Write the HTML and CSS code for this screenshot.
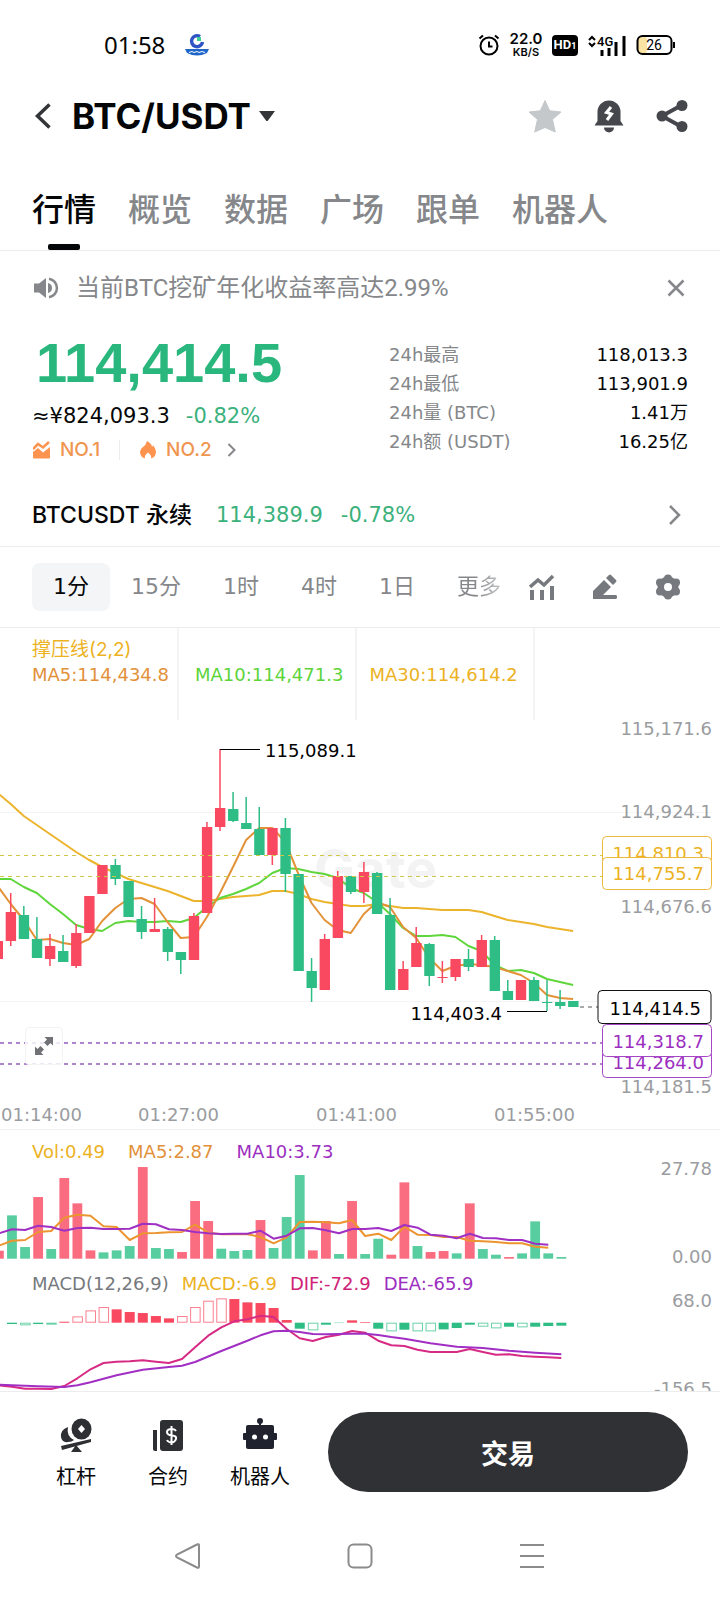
FILE: index.html
```html
<!DOCTYPE html>
<html lang="zh-CN">
<head>
    <meta charset="UTF-8">
    <meta name="viewport" content="width=device-width, initial-scale=1.0">

    <title>BTC/USDT</title>

    <link rel="stylesheet" href="styles.css">
</head>

<body>
    <!-- Status bar -->
    <div class="status-bar">
        <span class="clock">01:58</span>
        <svg class="status-app" width="24" height="24" viewBox="0 0 24 24">
            <path d="M15 3.500A5.500 5.500 0 1 0 17.500 9" fill="none" stroke="#2f55c4" stroke-width="3.500"/>
            <rect x="12" y="4" width="4" height="4" fill="#3fd09a"/>
            <path d="M0 16h24l-2 4q-10 5-20 0z" fill="#1f66c9"/>
            <path d="M4 19.500l3-1 2 1 3-1 2 1 3-1 3 1" fill="none" stroke="#fff" stroke-width="1"/>
        </svg>
        <div class="status-right">
            <svg width="22" height="24" viewBox="0 0 22 24" fill="none" stroke="#000" stroke-width="2">
                <circle cx="11" cy="13" r="8.500"/>
                <path d="M11 8.500V13.500H14.500M1.500 5.500L5 2.500M20.500 5.500L17 2.500"/>
            </svg>
            <div class="net-speed"><b>22.0</b><span>KB/S</span></div>
            <span class="hd-badge">HD<small>1</small></span>
            <svg width="38" height="24" viewBox="0 0 38 24">
                <path d="M1 7l3-3 3 3M1 10l3 3 3-3" fill="none" stroke="#000" stroke-width="2"/>
                <text x="9" y="13" class="net-type">4G</text>
                <path d="M14 17v6M21 15v8M28 9v14M36 3v20" stroke="#000" stroke-width="3"/>
            </svg>
            <svg width="40" height="24" viewBox="0 0 40 24">
                <rect x="2" y="3" width="9" height="18" rx="4" fill="#fbe3a4"/>
                <rect x="1.500" y="3" width="34" height="18" rx="5" fill="none" stroke="#000" stroke-width="2"/>
                <path d="M38 9v6" stroke="#000" stroke-width="2"/>
                <text x="18" y="17" class="battery-text">26</text>
            </svg>
        </div>
    </div>

    <!-- Pair header -->
    <header class="header">
        <button class="icon-btn" aria-label="返回">
            <svg width="18" height="28" viewBox="0 0 18 28"><path d="M15.500 2.500L3.500 14l12 11.500" fill="none" stroke="#333538" stroke-width="3.500"/></svg>
        </button>
        <button class="pair">
            <h1>BTC/USDT</h1>
            <svg width="16" height="12" viewBox="0 0 16 12"><path d="M0 1h16L9 10.500q-1 1-2 0z" fill="#333538"/></svg>
        </button>
        <div class="header-icons">
            <button class="icon-btn" aria-label="收藏">
                <svg width="34" height="34" viewBox="0 0 34 34"><path d="M17 1.500l4.700 10.300 11.300 1.200-8.500 7.500 2.800 12.500L17 28.500 6.700 33l2.800-12.500L1 13l11.300-1.200z" fill="#c4c8cb" stroke="#c4c8cb" stroke-linejoin="round"/></svg>
            </button>
            <button class="icon-btn" aria-label="提醒">
                <svg width="30" height="34" viewBox="0 0 30 34">
                    <path d="M3.500 25V13a11.500 11.500 0 0 1 23 0v9l3 4.500H.500l3-4.500z" fill="#45474c"/>
                    <path d="M10 28.500h10a5 5 0 0 1-10 0z" fill="#45474c"/>
                    <path d="M17 8l-4.500 5.500 5 1.500-4.500 6" fill="none" stroke="#fff" stroke-width="3"/>
                </svg>
            </button>
            <button class="icon-btn" aria-label="分享">
                <svg width="32" height="34" viewBox="0 0 32 34" fill="#45474c">
                    <path d="M26 6L6 17l20 11" fill="none" stroke="#45474c" stroke-width="4"/>
                    <circle cx="6" cy="17" r="5.500"/><circle cx="26" cy="6.500" r="5.500"/><circle cx="26" cy="27.500" r="5.500"/>
                </svg>
            </button>
        </div>
    </header>

    <nav class="tabs">
        <a href="#" class="active">行情</a>
        <a href="#">概览</a>
        <a href="#">数据</a>
        <a href="#">广场</a>
        <a href="#">跟单</a>
        <a href="#">机器人</a>
    </nav>

    <!-- Notice -->
    <div class="notice">
        <svg width="26" height="22" viewBox="0 0 26 22">
            <path d="M0 6.500h5L12 1v20L5 15.500H0z" fill="#85878a"/>
            <path d="M14 6q4 1 4 5t-4 5z" fill="#85878a"/>
            <path d="M15 1.800a9.300 9.300 0 0 1 0 18.400" fill="none" stroke="#85878a" stroke-width="2.500"/>
        </svg>
        <p>当前BTC挖矿年化收益率高达2.99%</p>
        <button class="icon-btn" aria-label="关闭">
            <svg width="18" height="18" viewBox="0 0 18 18"><path d="M1.500 1.500l15 15M16.500 1.500l-15 15" stroke="#85878a" stroke-width="2.500"/></svg>
        </button>
    </div>

    <!-- Price summary -->
    <section class="summary">
        <div class="price-box">
            <div class="price">114,414.5</div>
            <div class="price-sub"><span>≈¥824,093.3</span><span class="up">-0.82%</span></div>
            <a href="#" class="ranks">
                <svg width="18" height="18" viewBox="0 0 18 18">
                    <path d="M0 8l5-5 5 3.500L16 1" fill="none" stroke="#fc9450" stroke-width="2.500"/>
                    <path d="M0 11l5-4 5 4.500L17 6v10.500q0 1-1 1H1q-1 0-1-1z" fill="#fc9450"/>
                </svg>
                <span>NO.1</span>
                <i></i>
                <svg width="18" height="18" viewBox="0 0 18 18"><path d="M8 0q5 3 5 6 1-1 1-2 3 4 3 7a7 7 0 0 1-5 6.500q1-3-3-6-4 3-3 6A7 7 0 0 1 1 11q0-3 3-5 3-2 4-6z" fill="#fc9450"/></svg>
                <span>NO.2</span>
                <svg width="10" height="16" viewBox="0 0 10 16"><path d="M1.500 2l6 6-6 6" fill="none" stroke="#85878a" stroke-width="2"/></svg>
            </a>
        </div>
        <dl class="stats">
            <dt>24h最高</dt><dd>118,013.3</dd>
            <dt>24h最低</dt><dd>113,901.9</dd>
            <dt>24h量 (BTC)</dt><dd>1.41万</dd>
            <dt>24h额 (USDT)</dt><dd>16.25亿</dd>
        </dl>
    </section>

    <a href="#" class="perp">
        <span>BTCUSDT 永续</span>
        <span class="up">114,389.9</span>
        <span class="up">-0.78%</span>
        <svg width="14" height="22" viewBox="0 0 14 22"><path d="M2 2l9 9-9 9" fill="none" stroke="#85878a" stroke-width="2.500"/></svg>
    </a>

    <!-- Time frames -->
    <div class="frames">
        <button class="active">1分</button>
        <button>15分</button>
        <button>1时</button>
        <button>4时</button>
        <button>1日</button>
        <button class="more">更多</button>
        <div class="tools">
            <button aria-label="指标">
                <svg width="26" height="26" viewBox="0 0 26 26" fill="none" stroke="#76797d" stroke-width="4">
                    <path d="M1 13l8-7 6 5L24 2" stroke-width="3.500"/><path d="M3 16v10M13 16v10M23 12v14"/>
                </svg>
            </button>
            <button aria-label="画线">
                <svg width="26" height="26" viewBox="0 0 26 26" fill="#76797d">
                    <path d="M1 25v-8L12 6l7 7-8 8h13q1 0 1 2t-1 2z"/><path d="M14 4l3-3q1-1 2 0l5 5q1 1 0 2l-3 3z"/>
                </svg>
            </button>
            <button aria-label="设置">
                <svg width="26" height="26" viewBox="0 0 26 26" fill="#76797d">
                    <circle cx="13" cy="13" r="10.500"/>
                    <circle cx="13" cy="4.500" r="4"/><circle cx="13" cy="21.500" r="4"/>
                    <circle cx="5" cy="8.500" r="4"/><circle cx="21" cy="8.500" r="4"/>
                    <circle cx="5" cy="17.500" r="4"/><circle cx="21" cy="17.500" r="4"/>
                    <circle cx="13" cy="13" r="4" fill="#fff"/>
                </svg>
            </button>
        </div>
    </div>

    <!-- Candles -->
    <section class="panel">
        <div class="legend">
            <div class="indicator yellow">撑压线(2,2)</div>
            <div class="legend-row wide">
                <span class="orange">MA5:114,434.8</span>
                <span class="green">MA10:114,471.3</span>
                <span class="yellow">MA30:114,614.2</span>
            </div>
        </div>
        <svg viewBox="0 628 720 501">
            <path class="col-line" d="M178 628v92M356 628v92M534 628v92"/>
            <path class="grid-line" d="M0 812.500h712M0 1001.500h712"/>
            <text class="watermark" x="314" y="888">Gate</text>
            <g id="candles"></g>
            <path class="level yellow-line" d="M0 855.500h602M0 876.500h602"/>
            <path class="level purple-line" d="M0 1043h602M0 1064h602"/>
            <path class="level" stroke="#555" d="M580 1007h18"/>
            <path d="M220 749.500h40M507 1011.500h40" stroke="#000"/>
            <text x="265" y="757" class="mark">115,089.1</text>
            <text x="502" y="1020" class="mark end">114,403.4</text>
            <g class="axis">
                <text x="712" y="735">115,171.6</text>
                <text x="712" y="818">114,924.1</text>
                <text x="712" y="913">114,676.6</text>
                <text x="712" y="1093">114,181.5</text>
            </g>
            <g class="tag tag-yellow">
                <rect x="602.500" y="836.500" width="109" height="32" rx="4"/><text x="704" y="860">114,810.3</text>
                <rect x="602.500" y="857.500" width="109" height="32" rx="4"/><text x="704" y="880">114,755.7</text>
            </g>
            <g class="tag tag-purple">
                <rect x="602.500" y="1045.500" width="109" height="32" rx="4"/><text x="704" y="1069">114,264.0</text>
                <rect x="602.500" y="1024.500" width="109" height="32" rx="4"/><text x="704" y="1048">114,318.7</text>
            </g>
            <g class="tag tag-black">
                <rect x="598" y="990.500" width="113" height="33" rx="4"/><text x="701" y="1015">114,414.5</text>
            </g>
            <g class="axis times">
                <text x="1" y="1121">01:14:00</text>
                <text x="138" y="1121">01:27:00</text>
                <text x="316" y="1121">01:41:00</text>
                <text x="494" y="1121">01:55:00</text>
            </g>
        </svg>
        <button class="expand" aria-label="全屏">
            <svg width="18" height="18" viewBox="0 0 18 18" fill="#707275"><path d="M9.500 0H18v8.500l-2.500-2.500-3 3L9 5.500l3-3zM0 9.500V18h8.500L6 15.500l3-3L5.500 9l-3 3z"/></svg>
        </button>
    </section>

    <!-- Volume -->
    <section class="panel volume">
        <div class="legend legend-row">
            <span class="yellow">Vol:0.49</span>
            <span class="orange">MA5:2.87</span>
            <span class="purple">MA10:3.73</span>
        </div>
        <svg viewBox="0 0 720 136">
            <g id="volume"></g>
            <g class="axis">
                <text x="712" y="45">27.78</text>
                <text x="712" y="133">0.00</text>
            </g>
        </svg>
    </section>

    <!-- MACD -->
    <section class="panel last">
        <div class="legend legend-row tight">
            <span class="grey">MACD(12,26,9)</span>
            <span class="yellow">MACD:-6.9</span>
            <span class="pink">DIF:-72.9</span>
            <span class="purple">DEA:-65.9</span>
        </div>
        <svg viewBox="0 136 720 125">
            <g id="macd"></g>
            <g class="axis">
                <text x="712" y="177">68.0</text>
                <text x="712" y="265">-156.5</text>
            </g>
        </svg>
    </section>

    <!-- Bottom actions -->
    <footer class="actions">
        <a href="#">
            <svg width="36" height="36" viewBox="0 0 36 36" fill="#2d2f33">
                <ellipse cx="23.500" cy="12" rx="10" ry="10.500"/>
                <path d="M23.500 8l3.500 4-3.500 4-3.500-4z" fill="#fff"/>
                <path d="M10 10Q2 13 3 20q1 6 7 5 4 0 6-2-8-4-6-13z"/>
                <path d="M3 29L33 22v3L4 33zM18 28l6 7H13z"/>
            </svg>
            <span>杠杆</span>
        </a>
        <a href="#">
            <svg width="36" height="36" viewBox="0 0 36 36" fill="#2d2f33">
                <path d="M3 13h4v21H5q-2 0-2-2z"/><rect x="10" y="3" width="23" height="31" rx="3"/>
                <path d="M26 14q-1-2-4-2-5 0-5 3t5 3.500 4 3.500-4 3.500q-4 0-5-2.500M21.500 9v19" fill="none" stroke="#fff" stroke-width="2"/>
            </svg>
            <span>合约</span>
        </a>
        <a href="#">
            <svg width="36" height="36" viewBox="0 0 36 36" fill="#20232e">
                <circle cx="18" cy="4" r="3"/><path d="M17 5h2v5h-2z"/>
                <rect x="4" y="8" width="28" height="24" rx="2"/><rect x="1" y="16" width="34" height="7" rx="1"/>
                <circle cx="12.500" cy="20" r="2.500" fill="#fff"/><circle cx="23.500" cy="20" r="2.500" fill="#fff"/>
            </svg>
            <span>机器人</span>
        </a>
        <button class="trade">交易</button>
    </footer>

    <!-- System navigation -->
    <div class="sys-nav">
        <svg width="28" height="28" viewBox="0 0 28 28"><path d="M23 2.500q2-1 2 1v21q0 2-2 1L3 15.500q-2-1.500 0-3z"/></svg>
        <svg width="28" height="28" viewBox="0 0 28 28"><rect x="2.500" y="2.500" width="23" height="23" rx="5"/></svg>
        <svg width="28" height="28" viewBox="0 0 28 28"><path d="M2 3h24M2 14h24M2 25h24"/></svg>
    </div>

    <script src="chart.js"></script>
</body>

</html>
```
FILE: styles.css
```css
* {
    box-sizing: border-box;
}

body {
    margin: 0;
    background-color: #fff;
    color: #050607;
    font-family: Inter, "Noto Sans CJK SC", sans-serif;
}

a {
    color: inherit;
    text-decoration: none;
}

button {
    padding: 0;
    border: none;
    background: none;
    color: inherit;
    font: inherit;
    cursor: pointer;
}

svg {
    display: block;
    flex-shrink: 0;
}

.up {
    color: #3bb17c;
}

.yellow {
    color: #ecb21f;
}

.orange {
    color: #e2913a;
}

.green {
    color: #5cd43a;
}

.purple {
    color: #9c2fc0;
}

.pink {
    color: #cf2277;
}

.grey {
    color: #76797d;
}

/* Status bar */
.status-bar {
    display: flex;
    align-items: center;
    height: 88px;
    padding: 2px 44px 0 104px;
}

.clock {
    font-family: "Noto Sans", sans-serif;
    font-size: 24px;
    line-height: 32px;
}

.status-app {
    margin-left: 20px;
}

.status-right {
    display: flex;
    align-items: center;
    gap: 10px;
    margin-left: auto;
}

.net-speed {
    display: flex;
    flex-direction: column;
    align-items: center;
    width: 32px;
    font-size: 11px;
    font-weight: 600;
    line-height: 12px;
}

.net-speed b {
    font-size: 15px;
    font-weight: 600;
    line-height: 14px;
}

.hd-badge {
    width: 26px;
    border-radius: 4px;
    background-color: #000;
    color: #fff;
    font-family: Roboto, sans-serif;
    font-size: 13px;
    font-weight: 700;
    line-height: 20px;
    text-align: center;
}

.hd-badge small {
    font-size: 9px;
}

.net-type {
    font-family: Roboto, sans-serif;
    font-size: 13px;
    font-weight: 500;
}

.battery-text {
    font-family: Roboto, sans-serif;
    font-size: 14px;
    text-anchor: middle;
}

/* Header */
.header {
    display: flex;
    align-items: center;
    height: 56px;
    padding: 0 32px 0 34px;
}

.pair {
    display: flex;
    align-items: center;
    gap: 8px;
    margin-left: 20px;
}

.pair h1 {
    margin: 0;
    font-size: 35px;
    font-weight: 700;
    line-height: 40px;
}

.header-icons {
    display: flex;
    gap: 32px;
    margin-left: auto;
}

/* Tabs */
.tabs {
    display: flex;
    gap: 32px;
    padding: 46px 32px 0;
    border-bottom: 1px solid #ececee;
    color: #85878a;
    font-size: 32px;
    font-weight: 500;
    line-height: 40px;
}

.tabs a {
    position: relative;
    padding-bottom: 20px;
}

.tabs .active {
    color: #050607;
}

.tabs .active::after {
    content: "";
    position: absolute;
    bottom: 0;
    left: 50%;
    width: 32px;
    height: 6px;
    margin-left: -16px;
    border-radius: 2px;
    background-color: #050607;
}

/* Notice */
.notice {
    display: flex;
    align-items: center;
    height: 74px;
    padding: 0 35px 0 34px;
    color: #85878a;
}

.notice p {
    flex: 1;
    margin: 0 0 0 16px;
    font-family: Roboto, "Noto Sans CJK SC", sans-serif;
    font-size: 24px;
    line-height: 32px;
}

/* Price summary */
.summary {
    display: flex;
    justify-content: space-between;
    padding: 10px 32px 24px;
}

.price {
    padding-left: 4px;
    color: #2ab77d;
    font-family: "Liberation Sans", sans-serif;
    font-size: 56px;
    font-weight: 700;
    line-height: 56px;
}

.price-sub {
    display: flex;
    gap: 16px;
    margin-top: 11px;
    font-family: "DejaVu Sans", sans-serif;
    font-size: 21px;
    line-height: 28px;
}

.ranks {
    display: flex;
    align-items: center;
    gap: 9px;
    margin-top: 10px;
    padding-left: 1px;
    color: #f09550;
    font-size: 19px;
    font-weight: 500;
    line-height: 20px;
}

.ranks i {
    width: 1px;
    height: 20px;
    margin: 0 10px;
    background-color: #ececee;
}

.ranks svg:last-child {
    margin-left: 6px;
}

.stats {
    display: grid;
    grid-template-columns: auto auto;
    grid-auto-rows: 29px;
    width: 299px;
    margin: 5px 0 0;
    font-family: "DejaVu Sans", "Noto Sans CJK SC", sans-serif;
    font-size: 18px;
    line-height: 29px;
}

.stats dt {
    color: #85878a;
}

.stats dd {
    margin: 0;
    text-align: right;
}

/* Perpetual contract */
.perp {
    display: flex;
    align-items: center;
    height: 63px;
    padding: 0 38px 0 32px;
    border-bottom: 1px solid #ececee;
    font-size: 23px;
    font-weight: 500;
    line-height: 32px;
}

.perp .up {
    margin-left: 24px;
    font-family: "DejaVu Sans", sans-serif;
    font-size: 21px;
    font-weight: 400;
}

.perp .up + .up {
    margin-left: 18px;
}

.perp svg {
    margin-left: auto;
}

/* Time frames */
.frames {
    display: flex;
    align-items: center;
    height: 81px;
    padding: 0 39px 0 32px;
    border-bottom: 1px solid #ececee;
    color: #85878a;
    font-family: "DejaVu Sans", "Noto Sans CJK SC", sans-serif;
    font-size: 22px;
    line-height: 32px;
}

.frames > button {
    height: 48px;
    padding: 0 21px;
    border-radius: 8px;
}

.frames > .active {
    background-color: #f3f5f7;
    color: #050607;
}

.frames > .more {
    padding-right: 0;
    background: linear-gradient(to right, #85878a 60%, #c4c5c7);
    background-clip: text;
    -webkit-background-clip: text;
    color: transparent;
}

.tools {
    display: flex;
    gap: 37px;
    margin-left: auto;
}

/* Chart panels */
.panel {
    position: relative;
    border-bottom: 1px solid #f0f0f2;
    font-family: "DejaVu Sans", "Noto Sans CJK SC", sans-serif;
}

.panel + .panel {
    border-bottom: none;
}

.panel > svg {
    width: 100%;
}

.volume > svg {
    overflow: visible;
}

.legend {
    position: absolute;
    top: 9px;
    left: 32px;
    font-size: 18px;
    line-height: 25px;
}

.indicator {
    height: 25px;
    font-family: Inter, "Noto Sans CJK SC", sans-serif;
    font-size: 19px;
}

.legend-row {
    display: flex;
    gap: 23px;
}

.last .legend {
    top: 5px;
}

.wide {
    gap: 26px;
}

.tight {
    gap: 13px;
}

.col-line,
.grid-line {
    stroke: #f3f4f5;
}

.col-line {
    stroke-width: 2;
}

.watermark {
    fill: #f3f3f3;
    font-family: Inter, sans-serif;
    font-size: 54px;
    font-weight: 700;
}

.level {
    stroke-dasharray: 4;
}

.yellow-line {
    stroke: #cfc746;
}

.purple-line {
    stroke: #b184cf;
    stroke-width: 2;
}

.mark,
.axis text,
.tag text {
    font-size: 18px;
}

.axis text {
    fill: #9a9c9f;
    text-anchor: end;
}

.axis.times text {
    text-anchor: start;
}

.mark.end,
.tag text {
    text-anchor: end;
}

.tag rect {
    fill: #fff;
}

.tag-yellow rect {
    stroke: #ecb93c;
}

.tag-yellow text {
    fill: #ecb21f;
}

.tag-purple rect {
    stroke: #a646c6;
}

.tag-purple text {
    fill: #9c2fc0;
}

.tag-black rect {
    stroke: #111;
}

.expand {
    position: absolute;
    bottom: 64px;
    left: 25px;
    padding: 9px;
    border: 1px solid #f3f3f4;
    border-radius: 4px;
    background-color: rgba(255, 255, 255, 0.8);
}

/* Bottom actions */
.actions {
    display: flex;
    align-items: center;
    padding: 20px 32px 20px 30px;
    border-top: 1px solid #ececee;
}

.actions a {
    display: flex;
    flex-direction: column;
    align-items: center;
    gap: 9px;
    width: 92px;
    padding-top: 5px;
    font-size: 20px;
    line-height: 30px;
}

.trade {
    flex: 1;
    height: 80px;
    margin-left: 22px;
    border-radius: 40px;
    background-color: #303135;
    color: #fff;
    font-size: 27px;
    font-weight: 700;
}

.sys-nav {
    display: flex;
    justify-content: center;
    align-items: center;
    gap: 144px;
    height: 87px;
}

.sys-nav svg {
    fill: none;
    stroke: #8b8b8b;
    stroke-width: 2;
}
```
FILE: chart.js
```js
const RED = "#f84960";
const GREEN = "#2ebd85";
const STEP = 13.08;

function add(parent, tag, attrs) {
    const el = document.createElementNS("http://www.w3.org/2000/svg", tag);
    for (const key in attrs) {
        el.setAttribute(key, attrs[key]);
    }
    parent.appendChild(el);
}

// null = no point for that bar, the line goes straight on
function line(parent, x0, values, color, scale) {
    const points = [];
    values.forEach((v, i) => {
        if (v !== null) {
            points.push((x0 + i * STEP).toFixed(1) + "," + (v * scale).toFixed(1));
        }
    });
    add(parent, "polyline", { points: points.join(" "), fill: "none", stroke: color, "stroke-width": 2, "stroke-linejoin": "round" });
}

// [direction, high, body top, body bottom, low]
const candles = [
    ["r", 941, 941, 959, 959], ["r", 893, 912, 941, 946], ["g", 906, 915, 939, 939], ["g", 917, 939, 958, 958],
    ["r", 934, 946, 959, 966], ["g", 935, 951, 962, 962], ["r", 924, 933, 966, 968], ["r", 896, 896, 933, 933],
    ["r", 865, 865, 894, 894], ["g", 859, 865, 879, 885], ["g", 881, 881, 917, 917], ["g", 906, 919, 932, 939],
    ["r", 898, 929, 932, 932], ["g", 927, 929, 952, 961], ["g", 952, 952, 960, 974], ["r", 913, 916, 960, 960],
    ["r", 822, 827, 913, 913], ["r", 749, 808, 827, 831], ["g", 792, 809, 821, 822], ["g", 797, 823, 829, 829],
    ["g", 807, 829, 855, 855], ["r", 828, 828, 855, 865], ["g", 818, 828, 874, 892], ["g", 874, 874, 971, 971],
    ["g", 958, 971, 988, 1002], ["r", 934, 939, 990, 990], ["r", 871, 876, 938, 938], ["g", 876, 876, 892, 894],
    ["r", 862, 872, 892, 903], ["g", 872, 873, 914, 914], ["g", 898, 915, 990, 990], ["r", 961, 969, 990, 990],
    ["r", 927, 943, 967, 967], ["g", 943, 944, 976, 986], ["r", 961, 977, 978, 983], ["r", 959, 959, 977, 981],
    ["g", 949, 959, 967, 971], ["r", 935, 940, 967, 967], ["g", 936, 940, 991, 991], ["g", 980, 991, 1000, 1000],
    ["r", 980, 980, 1000, 1000], ["g", 977, 980, 1001, 1001], ["g", 980, 1002, 1003, 1011], ["g", 990, 1002, 1006, 1009],
    ["g", 1001, 1001, 1007, 1007]
];
const ma30 = [793, 804, 816, 825, 834, 843, 852, 860, 867, 873, 879, 883, 887, 891, 896, 901, 901, 899, 897, 896, 895, 891, 891, 894, 899, 902, 904, 906, 906, 904, 906, 908, 908, 909, 910, 910, 910, 912, 916, 920, 922, 924, 927, 929, 931];
const ma10 = [879, 879, 887, 893, 904, 914, 925, 929, 931, 923, 921, 922, 922, 921, 922, 918, 907, 898, 894, 889, 883, 873, 868, 869, 872, 874, 878, 888, 893, 902, 914, 928, 936, 936, 935, 937, 946, 951, 965, 971, 970, 973, 979, 982, 985];
const ma5 = [886, 904, 920, 940, 939, 943, 945, 939, 921, 908, 899, 898, 904, 922, 938, 937, 917, 893, 867, 840, 828, 828, 842, 874, 903, 920, 930, 933, 914, 902, 907, 927, 938, 958, 971, 966, 964, 965, 967, 971, 975, 983, 995, 998, 999];

const main = document.getElementById("candles");
line(main, -2.4, ma30, "#ecb42c", 1);
line(main, -2.4, ma10, "#5fd63c", 1);
line(main, -2.4, ma5, "#e39238", 1);
candles.forEach(([dir, high, top, bottom, low], i) => {
    const x = -2.4 + i * STEP;
    const color = dir === "r" ? RED : GREEN;
    add(main, "rect", { x: x - 0.7, y: high, width: 1.5, height: low - high, fill: color });
    add(main, "rect", { x: x - 5, y: top, width: 10.4, height: bottom - top, fill: color });
});

// Volume bars, measured from the zero line
const volume = [
    "r24", "g130", "g35", "r185", "g29", "r242", "r166", "r25", "g19", "g25", "g38", "r275", "g32", "g29", "r20",
    "r173", "r113", "g30", "g23", "g26", "r116", "g32", "g125", "g251", "r25", "r113", "g14", "r173", "g14", "g60",
    "r12", "r229", "g38", "r20", "r23", "g16", "r166", "g29", "g12", "r5", "g16", "g112", "g16", "g5"
];
const volMa5 = [347, 332, 330, 306, 303, 263, 254, 257, 289, 291, 330, 310, 309, 307, 306, 284, 308, 313, 313, 313, 321, 340, 322, 276, 275, 277, 280, 270, 318, 311, 330, 290, 314, 315, 321, 321, 332, 334, 336, 340, 340, 350, 353];
const volMa10 = [310, 298, 300, 287, 291, 302, 294, 293, 297, 297, 296, 281, 283, 298, 300, 306, 310, 312, 311, 311, 302, 326, 317, 295, 294, 301, 310, 297, 297, 294, 303, 285, 293, 314, 317, 325, 311, 324, 325, 330, 330, 341, 344];

const vol = document.getElementById("volume");
volume.forEach((bar, i) => {
    const h = bar.slice(1) / 3;
    add(vol, "rect", { x: -6 + i * STEP, y: 128.7 - h, width: 9.8, height: h, fill: bar[0] === "r" ? "#fa6d80" : "#58cd9f" });
});
line(vol, -1.1, volMa5, "#ec9530", 1 / 3);
line(vol, -1.1, volMa10, "#a030c4", 1 / 3);

// MACD bars: f = filled, h = hollow
const macd = [
    "f-4", "h-8", "f-4", "h-6", "f3", "h19", "h37", "h47", "f40", "f32", "f29", "f20", "f13", "h20", "h47", "h66",
    "h73", "f71", "f61", "f59", "f44", "f8", "f-18", "h-23", "f-6", "f-1", "f7", "f2", "f-18", "h-26", "f-21",
    "h-26", "h-26", "f-20", "f-16", "f-6", "h-12", "h-17", "f-12", "h-14", "f-12", "f-10", "f-9"
];
const dif = [766, 770, 776, 776, 777, 768, 745, 718, 699, 695, 694, 691, 695, 699, 687, 652, 617, 592, 574, 568, 557, 561, 597, 625, 633, 621, 614, 603, 608, 632, 646, 648, 659, 666, 666, 666, 657, 666, 674, 673, 678, 680, 682, 684];
const dea = [764, 766, 767, 769, null, 771, 766, 757, null, 736, null, 719, null, 711, 707, 696, null, 663, null, 632, 616, 604, 602, 606, 612, 613, 612, 611, 611, 615, 621, 626, null, 640, null, 650, null, 654, null, 662, null, 668, null, 673];

const macdGroup = document.getElementById("macd");
macd.forEach((bar, i) => {
    const value = Number(bar.slice(1));
    const color = value > 0 ? RED : GREEN;
    const h = Math.abs(value) / 3;
    const y = value > 0 ? 192.7 - h : 192.7;
    if (bar[0] === "f") {
        add(macdGroup, "rect", { x: 7 + i * STEP, y: y, width: 10, height: h, fill: color });
    } else {
        add(macdGroup, "rect", { x: 7.5 + i * STEP, y: y + 0.5, width: 9.5, height: Math.max(h - 1, 1), fill: "#fff", stroke: color, "stroke-opacity": 0.7 });
    }
});
line(macdGroup, -1.1, dif, "#d62a84", 1 / 3);
line(macdGroup, -1.1, dea, "#a22fc4", 1 / 3);
```
